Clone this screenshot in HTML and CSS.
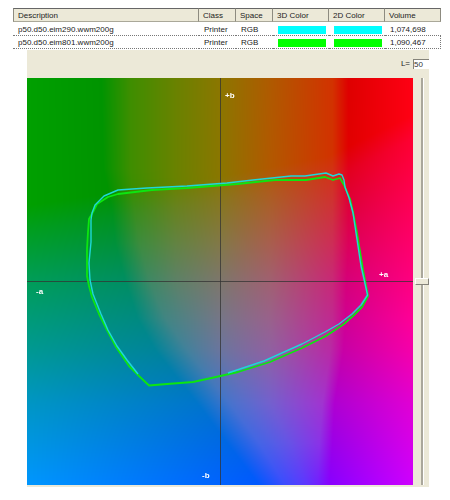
FILE: index.html
```html
<!DOCTYPE html>
<html lang="en">
<head>
<meta charset="utf-8">
<title>Gamut comparison</title>
<link rel="stylesheet" href="styles.css">
</head>
<body>
<table class="profiles">
  <colgroup><col class="c-desc"><col class="c-class"><col class="c-space"><col class="c-color"><col class="c-color"><col class="c-volume"></colgroup>
  <thead>
    <tr><th>Description</th><th>Class</th><th>Space</th><th>3D Color</th><th>2D Color</th><th>Volume</th></tr>
  </thead>
  <tbody>
    <tr><td>p50.d50.eim290.wwm200g</td><td>Printer</td><td>RGB</td><td><div class="swatch cyan"></div></td><td><div class="swatch cyan"></div></td><td>1,074,698</td></tr>
    <tr class="focused"><td>p50.d50.eim801.wwm200g</td><td>Printer</td><td>RGB</td><td><div class="swatch green"></div></td><td><div class="swatch green"></div></td><td>1,090,467</td></tr>
  </tbody>
</table>
<main class="panel">
  <div class="toolbar">
    <label for="lightness">L=</label>
    <input class="value" id="lightness" type="text" value="50">
  </div>
  <div class="view">
    <div class="plot">
      <canvas id="field" width="386" height="407"></canvas>
      <svg class="overlay" viewBox="0 0 386 407" role="img" aria-label="Gamut outlines in the a-b plane">
        <path class="axis" d="M193.5 0V407M0 203.5H386"/>
        <path class="outline green-line" d="M122 307.500 L140 306 166 304 189 299 211 294 243 284 275 270 299 258 317 246 327 237 335 229 341 218 336 192 330 155 326 134 323 121 317 107 313 100 306 102 298 99 279 102 248 102 210 106 160 110 125 112 91 116 81 119 70 126 66 134 62 141 61 154 60 171 60 198 62 208 65 219 72 236 80 252 89 269 102 288 112 298Z"/>
        <path class="outline cyan-line" d="M111 296 L100 282 90 268 81 252 74 236 66 216 63 202 62 185 64 164 64 142 65 135 68 127 77 118 91 112 120 110 160 108 200 105 226 102 264 98 278 98 299 95 306 98 312 96 315 97 317 102 318 109 322 120 326 135 329 155 334 188 340.500 217 334 227 325 236 312 246 298 254 275 266 237 283 201 295"/>
        <text x="198" y="20">+b</text>
        <text x="352" y="199">+a</text>
        <text x="9" y="216">-a</text>
        <text x="175" y="400">-b</text>
      </svg>
    </div>
    <input class="slider" type="range" min="0" max="100" value="50" aria-label="Lightness">
  </div>
</main>
<script src="field.js"></script>
</body>
</html>
```
FILE: styles.css
```css
* { box-sizing: border-box; }
body {
  margin: 0;
  padding: 8px 9px 13px 13px;
  background: #fff;
  color: #222;
  font: 8px/10px "Liberation Sans", Arial, sans-serif;
}
.profiles {
  width: 100%;
  table-layout: fixed;
  border-collapse: separate;
  border-spacing: 0;
}
.c-desc { width: 186px; }
.c-class, .c-space { width: 37px; }
.c-color { width: 56px; }
.profiles th {
  height: 14px;
  padding: 1px 4px 0;
  background: #ece9d8;
  border-top: 1px solid #666;
  border-right: 1px solid #8d8b80;
  border-bottom: 1px solid #aaa899;
  font-weight: normal;
  text-align: left;
}
.profiles th:first-child { border-left: 1px solid #8d8b80; }
.profiles td {
  height: 14px;
  padding: 2px 5px 0;
  border-bottom: 1px dotted #777;
}
.profiles .focused td { height: 13px; padding-top: 1px; }
.profiles .focused td:last-child { border-right: 1px dotted #777; }
.profiles td:nth-child(4), .profiles td:nth-child(5) { padding-right: 3px; }
.swatch { height: 8px; }
.cyan { background: #0ff; }
.green { background: #0f0; }
.panel {
  margin: 1px 12px 0 14px;
  background: #ece9d8;
  padding-bottom: 2px;
}
.toolbar {
  display: flex;
  justify-content: flex-end;
  align-items: center;
  gap: 3px;
  height: 28px;
}
.value {
  width: 16px;
  height: 10px;
  margin: 0;
  padding: 0;
  border: 1px solid #85837a;
  border-right: 0;
  border-bottom: 0;
  border-radius: 0;
  background: #fff;
  color: #333;
  font: inherit;
  line-height: 8px;
}
.view { display: flex; }
.plot { position: relative; flex: 1; }
.plot canvas { display: block; width: 100%; }
.overlay { position: absolute; inset: 0; width: 100%; height: 100%; }
.axis { stroke: #333; stroke-opacity: .75; fill: none; }
.outline { fill: none; stroke-width: 1.4; stroke-linejoin: round; }
.green-line { stroke: #0de610; stroke-width: 1.8; }
.cyan-line { stroke: #1ed8d8; }
.overlay text { fill: #fff; font: bold 8px "Liberation Sans", sans-serif; }
.slider {
  appearance: none;
  writing-mode: vertical-lr;
  direction: rtl;
  width: 14px;
  height: auto;
  margin: 0 0 0 2px;
  background: transparent;
}
.slider::-webkit-slider-runnable-track {
  width: 3px;
  background: #aaa79b;
  border-right: 1px solid #fff;
}
.slider::-webkit-slider-thumb {
  appearance: none;
  width: 14px;
  height: 7px;
  margin-left: -6px;
  background: #ece9d8;
  border: 1px solid #fff;
  border-right-color: #85837a;
  border-bottom-color: #85837a;
}
```
FILE: field.js
```js
// Fills the canvas with the a-b plane of Lab, interpolated from a colour table.
const canvas = document.getElementById("field");
const ctx = canvas.getContext("2d");

// Each row: y, then knots of [x, red, green] at the same gamut boundaries.
const rows = [
  [0,   [[0, 0, 160], [74, 0, 148], [103, 62, 142], [148, 105, 130], [193, 140, 118], [243, 175, 90], [305, 210, 50], [321, 222, 0], [386, 255, 0]]],
  [90,  [[0, 0, 160], [76, 0, 148], [103, 62, 142], [148, 105, 130], [193, 138, 118], [243, 178, 88], [305, 210, 50], [321, 226, 0], [386, 255, 0]]],
  [127, [[0, 0, 160], [84, 0, 147], [106, 56, 141], [148, 103, 130], [193, 134, 119], [243, 170, 94], [305, 206, 50], [321, 222, 0], [386, 255, 0]]],
  [165, [[0, 0, 158], [88, 0, 145], [112, 60, 140], [148, 98, 131], [193, 130, 120], [243, 168, 94], [305, 205, 45], [321, 220, 0], [386, 255, 0]]],
  [203, [[0, 0, 157], [98, 0, 142], [122, 62, 136], [148, 92, 129], [193, 125, 118], [243, 160, 96], [305, 200, 40], [319, 214, 0], [386, 255, 0]]],
  [240, [[0, 0, 155], [110, 0, 138], [138, 65, 133], [158, 84, 128], [193, 118, 118], [243, 153, 97], [305, 192, 40], [318, 208, 0], [386, 255, 0]]],
  [272, [[0, 0, 153], [128, 0, 132], [160, 66, 129], [172, 82, 124], [193, 106, 117], [243, 144, 96], [303, 184, 42], [316, 200, 0], [386, 246, 0]]],
  [325, [[0, 0, 150], [170, 0, 117], [202, 70, 115], [210, 80, 112], [220, 90, 108], [243, 115, 96], [295, 160, 52], [307, 175, 0], [386, 225, 0]]],
  [365, [[0, 0, 150], [200, 0, 103], [232, 68, 100], [240, 76, 96], [248, 86, 92], [262, 102, 82], [292, 138, 50], [305, 155, 0], [386, 216, 0]]],
  [407, [[0, 0, 150], [232, 0, 88], [258, 60, 75], [266, 72, 68], [272, 82, 62], [280, 94, 52], [290, 112, 32], [302, 135, 0], [386, 206, 0]]]
];

function mix(a, b, t) {
  return a + (b - a) * t;
}

// Linear interpolation through [position, value] stops.
function through(stops, p) {
  let i = 1;
  while (i < stops.length - 1 && stops[i][0] < p) i++;
  const [p0, v0] = stops[i - 1];
  const [p1, v1] = stops[i];
  return mix(v0, v1, Math.min(1, Math.max(0, (p - p0) / (p1 - p0))));
}

function draw(lightness) {
  const { width, height } = canvas;
  const image = ctx.createImageData(width, height);
  const gain = lightness / 50;
  for (let y = 0; y < height; y++) {
    let r = 1;
    while (r < rows.length - 1 && rows[r][0] < y) r++;
    const t = (y - rows[r - 1][0]) / (rows[r][0] - rows[r - 1][0]);
    const knots = rows[r][1].map((k, i) => k.map((v, j) => mix(rows[r - 1][1][i][j], v, t)));
    const red = knots.map(k => [k[0], k[1]]);
    const green = knots.map(k => [k[0], k[2]]);
    for (let x = 0; x < width; x++) {
      const u = x / width;
      const start = through([[0, 127], [193, 98], [300, 78], [386, 36]], x);
      const floor = through([[321, 0], [386, 20]], x);
      const blue = [[start, floor], [start + 24, floor + 30], [203, mix(88, 128, u)], [272, mix(146, 170, u)], [325, mix(196, 212, u)], [407, 255]];
      const i = 4 * (y * width + x);
      image.data[i] = gain * through(red, x);
      image.data[i + 1] = gain * through(green, x);
      image.data[i + 2] = gain * through(blue, y);
      image.data[i + 3] = 255;
    }
  }
  ctx.putImageData(image, 0, 0);
}

const slider = document.querySelector(".slider");
const field = document.getElementById("lightness");
slider.addEventListener("input", () => {
  field.value = slider.value;
  draw(Number(slider.value));
});
draw(50);
```
